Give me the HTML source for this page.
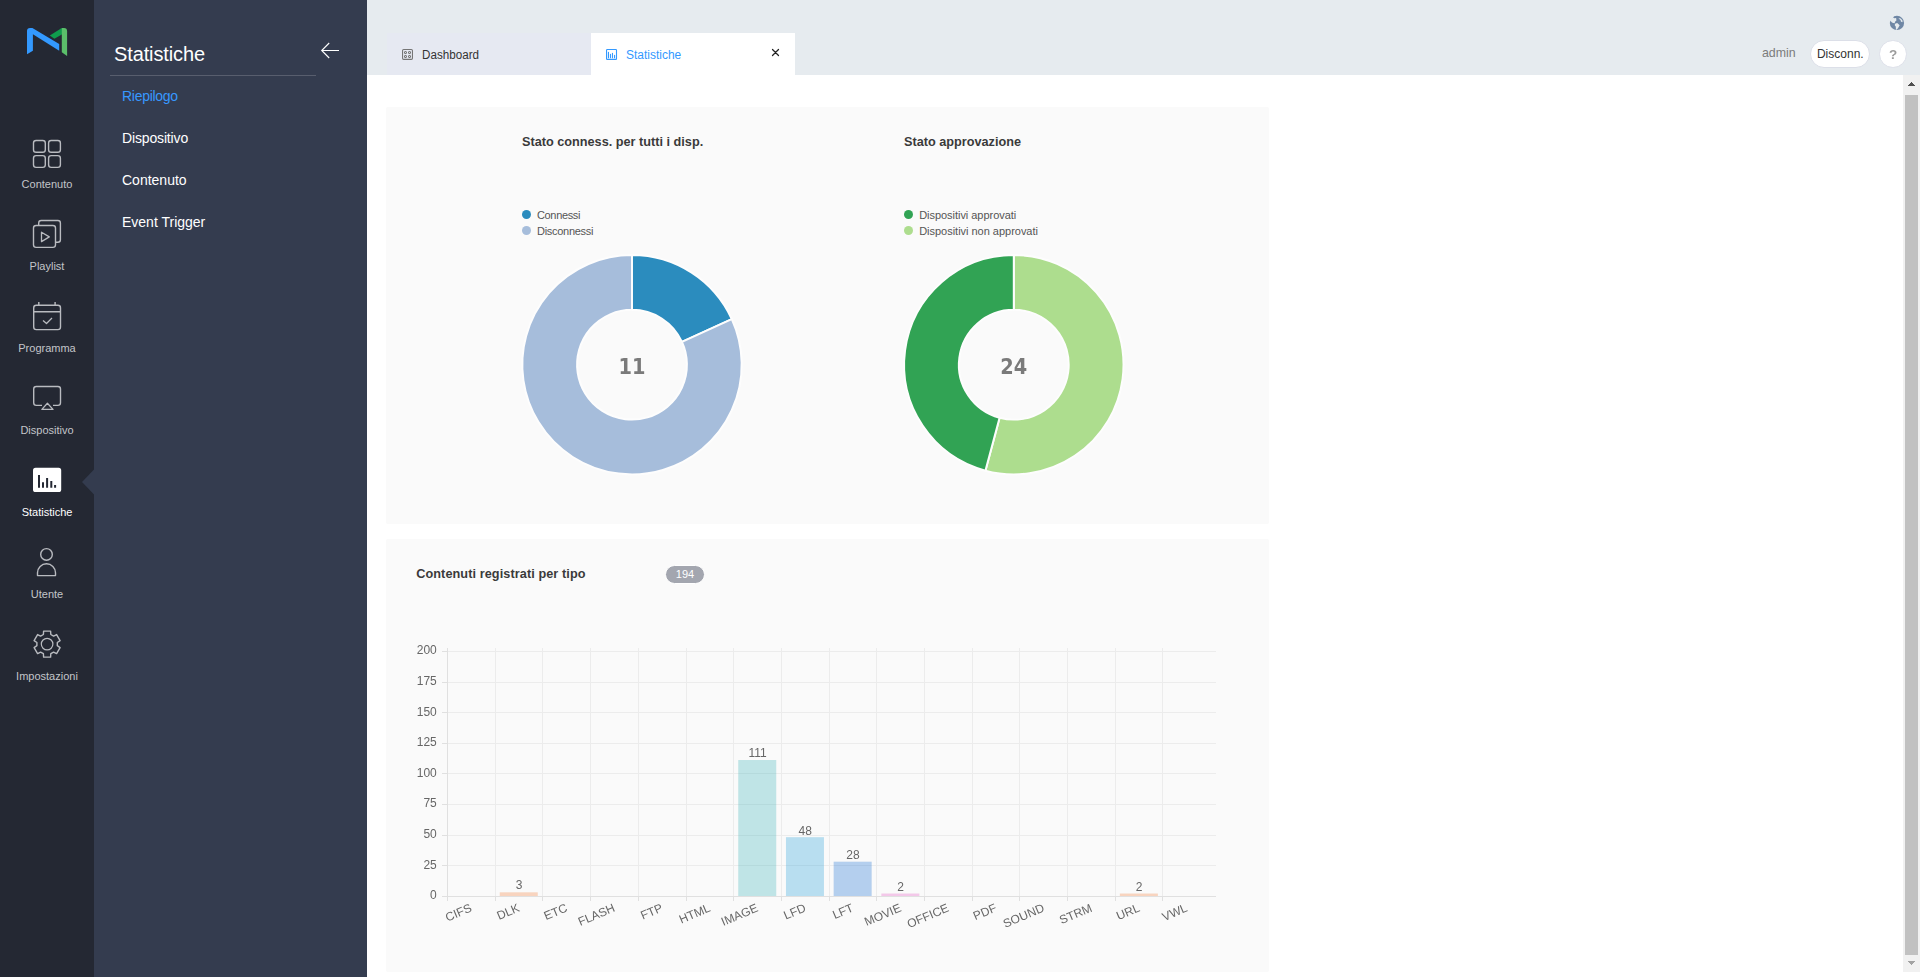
<!DOCTYPE html>
<html lang="it">
<head>
<meta charset="utf-8">
<title>Statistiche</title>
<style>
*{box-sizing:border-box;margin:0;padding:0}
html,body{width:1920px;height:977px;overflow:hidden;background:#fff}
body{position:relative;font-family:"Liberation Sans","DejaVu Sans",sans-serif;color:#333;-webkit-font-smoothing:antialiased}
.abs{position:absolute}
#nav{position:absolute;left:0;top:0;width:94px;height:977px;background:#242833}
#sub{position:absolute;left:94px;top:0;width:273px;height:977px;background:#343c4f}
#top{position:absolute;left:367px;top:0;width:1553px;height:75px;background:#e6ebef}
.navlbl{position:absolute;left:0;width:94px;text-align:center;font-size:11px;color:#c3c5c9;line-height:14px;white-space:nowrap}
.navlbl.on{color:#fff}
.subitem{position:absolute;left:28px;font-size:14px;color:#fff;line-height:20px;white-space:nowrap}
.tabtxt{font-size:12.5px;line-height:14px;white-space:nowrap;transform:scaleX(0.905);transform-origin:0 50%}
.card{position:absolute;left:386px;width:883px;background:#fafafa;border-radius:2px}
.card>*{margin-left:1px}
.ttl{position:absolute;font-weight:bold;font-size:12.7px;color:#3a3a3a;white-space:nowrap;line-height:16px}
.leg{position:absolute;font-size:11px;color:#555;white-space:nowrap;line-height:14px}
.dot{position:absolute;width:9.2px;height:9.2px;border-radius:50%}
</style>
</head>
<body>
<!-- LEFT NAV -->
<div id="nav">
<svg class="abs" style="left:0;top:0" width="94" height="977" viewBox="0 0 94 977" fill="none">
<!-- logo -->
<path d="M27,54.2 V31 Q27,28 30,28 H32.4 L59.2,43.9 V50.8 L32.9,34.2 V50.8 Z" fill="#3399ff"/>
<path d="M49.8,35.4 L61,28.4 L62.2,28 V34.2 L54.4,38.8 Z" fill="#0f9c4d"/>
<path d="M61.8,28 H64 Q67.1,28 67.1,31 V55.9 L61.8,52.3 Z" fill="#5bbf6a"/>
<g stroke="#b9bbc0" stroke-width="1.4" stroke-linejoin="round" stroke-linecap="butt">
<!-- contenuto -->
<rect x="33.5" y="140.5" width="11.8" height="11.8" rx="2.6"/>
<rect x="48.6" y="140.5" width="11.8" height="11.8" rx="2.6"/>
<rect x="33.5" y="155.6" width="11.8" height="11.8" rx="2.6"/>
<rect x="48.6" y="155.6" width="11.8" height="11.8" rx="2.6"/>
<!-- playlist -->
<rect x="33.5" y="225.5" width="22" height="21.9" rx="2.6"/>
<path d="M38.7,225 V223 Q38.7,220.5 41.2,220.5 H57.9 Q60.4,220.5 60.4,223 V239.7 Q60.4,242.2 57.9,242.2 H56"/>
<path d="M41.5,232.2 L49.3,236.9 L41.5,241.6 Z" stroke-width="1.3"/>
<!-- programma -->
<rect x="33.7" y="305.3" width="26.8" height="24.3" rx="2.6"/>
<path d="M33.7,311.7 H60.5 M38.8,302 V305.3 M55.1,302 V305.3"/>
<path d="M43,320.4 L46.5,323.5 L52,318" stroke-width="1.3"/>
<!-- dispositivo -->
<path d="M42,405.4 H36.3 Q33.7,405.4 33.7,402.8 V389.1 Q33.7,386.5 36.3,386.5 H57.9 Q60.5,386.5 60.5,389.1 V402.8 Q60.5,405.4 57.9,405.4 H53"/>
<path d="M47.4,403.3 L53,409.4 H41.9 Z" stroke-width="1.3"/>
<!-- utente -->
<circle cx="46.5" cy="554.4" r="5.8"/>
<path d="M37.5,575.6 V572.8 A9,9 0 0 1 55.5,572.8 V575.6 Z"/>
<!-- impostazioni -->
<path d="M50.8,634.5 L50.6,631.1 L43.6,631.1 L43.4,634.5 L40.6,636.1 L37.6,634.6 L34.1,640.6 L36.9,642.5 L36.9,645.7 L34.1,647.6 L37.6,653.6 L40.6,652.1 L43.4,653.7 L43.6,657.1 L50.6,657.1 L50.8,653.7 L53.6,652.1 L56.6,653.6 L60.1,647.6 L57.3,645.7 L57.3,642.5 L60.1,640.6 L56.6,634.6 L53.6,636.1Z"/>
<circle cx="47.1" cy="644.1" r="5.8" stroke-width="1.2"/>
</g>
<!-- statistiche (active) -->
<rect x="33" y="467.8" width="28.2" height="24.2" rx="2.6" fill="#fff"/>
<path d="M38,475 h2 v12.8 h-2z M42,482.3 h2 v5.5 h-2z M46.1,478 h2 v9.8 h-2z M50.3,481 h2 v6.8 h-2z M54.1,485 h2 v2.8 h-2z" fill="#242833"/>
<path d="M94,469.5 L82,482 L94,494.5 Z" fill="#343c4f"/>
</svg>
<div class="navlbl" style="top:177px">Contenuto</div>
<div class="navlbl" style="top:259px">Playlist</div>
<div class="navlbl" style="top:341px">Programma</div>
<div class="navlbl" style="top:423px">Dispositivo</div>
<div class="navlbl on" style="top:505px">Statistiche</div>
<div class="navlbl" style="top:587px">Utente</div>
<div class="navlbl" style="top:669px">Impostazioni</div>
</div>
<!-- SUB MENU -->
<div id="sub">
<div class="abs" style="left:20px;top:41.5px;font-size:20px;line-height:24px;color:#fff;white-space:nowrap;letter-spacing:-0.12px">Statistiche</div>
<div class="abs" style="left:16px;top:75px;width:206px;height:1px;background:#585e6e"></div>
<svg class="abs" style="left:224px;top:40px" width="24" height="22" viewBox="318 40 24 22" fill="none" stroke="#fff" stroke-width="1.1"><path d="M321.7,50.5 H339 M329.2,43 L321.7,50.5 L329.2,58"/></svg>
<div class="subitem" style="top:86px;color:#3798ff;letter-spacing:-0.28px">Riepilogo</div>
<div class="subitem" style="top:128px;letter-spacing:-0.15px">Dispositivo</div>
<div class="subitem" style="top:170px">Contenuto</div>
<div class="subitem" style="top:212px">Event Trigger</div>
</div>
<!-- TOP BAR -->
<div id="top">
<!-- tabs -->
<div class="abs" style="left:20.2px;top:33px;width:203.8px;height:42px;background:#e6e9f2"></div>
<svg class="abs" style="left:33px;top:47px" width="16" height="16" viewBox="400 47 16 16" fill="none" stroke="#757575" stroke-width="1.1"><rect x="402.55" y="49.45" width="9.9" height="9.9" rx="1.1"/><g stroke-width="1"><rect x="404.5" y="51.6" width="1.95" height="1.95" rx="0.35"/><rect x="408.55" y="51.6" width="1.95" height="1.95" rx="0.35"/><rect x="404.5" y="55.55" width="1.95" height="1.95" rx="0.35"/><rect x="408.55" y="55.55" width="1.95" height="1.95" rx="0.35"/></g></svg>
<div class="abs tabtxt" style="left:55.3px;top:48.3px;color:#333;transform:scaleX(0.932)">Dashboard</div>
<div class="abs" style="left:223.75px;top:33px;width:204.25px;height:42px;background:#fff"></div>
<svg class="abs" style="left:237px;top:47px" width="16" height="16" viewBox="604 47 16 16" fill="none" stroke="#3399ff" stroke-width="1.1"><rect x="606.55" y="49.55" width="9.95" height="9.8" rx="0.7"/><path d="M608.46,52.3 V57.8 M610.47,54.3 V57.8 M612.48,53.3 V57.8 M614.57,55.3 V57.8" stroke-linecap="round"/></svg>
<div class="abs tabtxt" style="left:258.7px;top:48.3px;color:#3399ff;transform:scaleX(0.957)">Statistiche</div>
<svg class="abs" style="left:403px;top:47px" width="11" height="11" viewBox="770 47 11 11" fill="none" stroke="#222" stroke-width="1.25" stroke-linecap="round"><path d="M772.5,49.5 L778.5,55.5 M778.5,49.5 L772.5,55.5"/></svg>
<!-- user area -->
<div class="abs" style="left:1394.9px;top:45.6px;font-size:12.4px;line-height:14px;color:#7b7b7b;white-space:nowrap">admin</div>
<div class="abs" style="left:1443.3px;top:40px;width:60px;height:27.8px;border-radius:14px;background:#fff;border:1px solid #dcdfe8;font-size:12px;line-height:26.4px;color:#333;text-align:center;white-space:nowrap">Disconn.</div>
<div class="abs" style="left:1512.3px;top:40.2px;width:27.5px;height:27.5px;border-radius:50%;background:#fff;border:1px solid #dcdfe8;font-size:13.5px;font-weight:bold;line-height:27.6px;color:#9c9c9c;text-align:center;text-indent:0.8px;will-change:transform">?</div>
<svg class="abs" style="left:1513px;top:8px" width="32" height="30" viewBox="0 0 1042 977"><circle cx="552" cy="488" r="232" fill="#6f87a5"/><g fill="#e6ebef"><path d="M300,420 L330,400 L420,310 L470,330 L525,325 L535,410 L495,440 L475,495 L430,490 L390,470 L330,410 L300,440 Z"/><path d="M290,430 A262,262 0 0 1 440,250 L430,315 L335,405 Z"/><path d="M490,510 L560,490 L640,560 L595,640 L545,712 L520,700 L512,600 L480,560 Z"/><path d="M610,330 L680,340 L740,420 L722,462 L680,440 L670,390 L612,352 Z"/></g></svg>
</div>
<!-- CONTENT -->
<div class="card" id="card1" style="top:107px;height:417px">
<div class="ttl" style="left:135px;top:26.5px">Stato conness. per tutti i disp.</div>
<div class="ttl" style="left:517px;top:26.5px">Stato approvazione</div>
<div class="dot" style="left:135px;top:102.8px;background:#2b8cbe"></div>
<div class="leg" style="left:150px;top:101px;letter-spacing:-0.35px">Connessi</div>
<div class="dot" style="left:135px;top:118.8px;background:#a6bddb"></div>
<div class="leg" style="left:150px;top:117px;letter-spacing:-0.28px">Disconnessi</div>
<div class="dot" style="left:517px;top:102.8px;background:#31a354"></div>
<div class="leg" style="left:532.2px;top:101px;letter-spacing:-0.04px">Dispositivi approvati</div>
<div class="dot" style="left:517px;top:118.8px;background:#addd8e"></div>
<div class="leg" style="left:532.2px;top:117px;letter-spacing:-0.02px">Dispositivi non approvati</div>
<svg class="abs" style="left:0;top:0;will-change:transform" width="882" height="417" viewBox="387 107 882 417">
<g stroke="#fdfdfd" stroke-width="2" stroke-linejoin="bevel">
<path d="M632.00,255.00 A109.7,109.7 0 0 1 731.79,319.13 L681.94,341.89 A54.9,54.9 0 0 0 632.00,309.80 Z" fill="#2b8cbe"/>
<path d="M731.79,319.13 A109.7,109.7 0 1 1 632.00,255.00 L632.00,309.80 A54.9,54.9 0 1 0 681.94,341.89 Z" fill="#a6bddb"/>
<path d="M1013.80,255.00 A109.7,109.7 0 1 1 985.41,470.66 L999.59,417.73 A54.9,54.9 0 1 0 1013.80,309.80 Z" fill="#addd8e"/>
<path d="M985.41,470.66 A109.7,109.7 0 0 1 1013.80,255.00 L1013.80,309.80 A54.9,54.9 0 0 0 999.59,417.73 Z" fill="#31a354"/>
</g>
<g font-family="'DejaVu Sans Condensed','Liberation Sans',sans-serif" font-weight="bold" font-size="21.5" fill="#7a7a7a" text-anchor="middle">
<text x="632" y="374">11</text><text x="1013.8" y="374">24</text></g>
</svg>
</div>
<div class="card" id="card2" style="top:539px;height:433px">
<div class="ttl" style="left:29.2px;top:26.5px;letter-spacing:0.08px">Contenuti registrati per tipo</div>
<div class="abs" style="left:278px;top:26px;width:40px;height:19px;border-radius:9.5px;background:#a3a6af;border:1px solid #fff;color:#fff;font-size:11px;line-height:17.4px;text-align:center">194</div>
<svg class="abs" style="left:0;top:0;will-change:transform" width="882" height="433" viewBox="387 539 882 433">
<path d="M448,651.5 H1216 M448,682.5 H1216 M448,712.5 H1216 M448,743.5 H1216 M448,773.5 H1216 M448,804.5 H1216 M448,835.5 H1216 M448,865.5 H1216 M495.5,648 V896 M542.5,648 V896 M590.5,648 V896 M638.5,648 V896 M686.5,648 V896 M733.5,648 V896 M781.5,648 V896 M829.5,648 V896 M876.5,648 V896 M924.5,648 V896 M972.5,648 V896 M1019.5,648 V896 M1067.5,648 V896 M1115.5,648 V896 M1162.5,648 V896" stroke="#ececec" stroke-width="1" fill="none"/>
<path d="M442,651.5 H447 M442,682.5 H447 M442,712.5 H447 M442,743.5 H447 M442,773.5 H447 M442,804.5 H447 M442,835.5 H447 M442,865.5 H447 M442,896.5 H1216 M447.5,648 V901 M495.5,897 V901 M542.5,897 V901 M590.5,897 V901 M638.5,897 V901 M686.5,897 V901 M733.5,897 V901 M781.5,897 V901 M829.5,897 V901 M876.5,897 V901 M924.5,897 V901 M972.5,897 V901 M1019.5,897 V901 M1067.5,897 V901 M1115.5,897 V901 M1162.5,897 V901" stroke="#e0e0e0" stroke-width="1" fill="none"/>
<rect x="499.75" y="892.33" width="38.0" height="3.67" fill="rgb(244,141,79)" fill-opacity="0.35"/>
<rect x="738.25" y="760.02" width="38.0" height="135.98" fill="rgb(79,187,193)" fill-opacity="0.35"/>
<rect x="785.95" y="837.20" width="38.0" height="58.80" fill="rgb(59,170,221)" fill-opacity="0.35"/>
<rect x="833.65" y="861.70" width="38.0" height="34.30" fill="rgb(50,127,216)" fill-opacity="0.35"/>
<rect x="881.35" y="893.55" width="38.0" height="2.45" fill="rgb(230,107,201)" fill-opacity="0.35"/>
<rect x="1119.85" y="893.55" width="38.0" height="2.45" fill="rgb(244,141,79)" fill-opacity="0.35"/>
<g font-family="'Liberation Sans',sans-serif" font-size="12" fill="#666">
<g text-anchor="middle">
<text x="519.05" y="889.03">3</text>
<text x="757.55" y="756.73">111</text>
<text x="805.25" y="834.90">48</text>
<text x="852.95" y="859.40">28</text>
<text x="900.65" y="891.25">2</text>
<text x="1139.15" y="891.25">2</text>
</g>
<g text-anchor="end">
<text x="436.8" y="654.30">200</text>
<text x="436.8" y="684.92">175</text>
<text x="436.8" y="715.55">150</text>
<text x="436.8" y="746.17">125</text>
<text x="436.8" y="776.80">100</text>
<text x="436.8" y="807.42">75</text>
<text x="436.8" y="838.05">50</text>
<text x="436.8" y="868.67">25</text>
<text x="436.8" y="899.30">0</text>
</g>
<g text-anchor="end">
<text transform="translate(471.05,907) rotate(-23)" x="0" y="4.3">CIFS</text>
<text transform="translate(518.75,907) rotate(-23)" x="0" y="4.3">DLK</text>
<text transform="translate(566.45,907) rotate(-23)" x="0" y="4.3">ETC</text>
<text transform="translate(614.15,907) rotate(-23)" x="0" y="4.3">FLASH</text>
<text transform="translate(661.85,907) rotate(-23)" x="0" y="4.3">FTP</text>
<text transform="translate(709.55,907) rotate(-23)" x="0" y="4.3">HTML</text>
<text transform="translate(757.25,907) rotate(-23)" x="0" y="4.3">IMAGE</text>
<text transform="translate(804.95,907) rotate(-23)" x="0" y="4.3">LFD</text>
<text transform="translate(852.65,907) rotate(-23)" x="0" y="4.3">LFT</text>
<text transform="translate(900.35,907) rotate(-23)" x="0" y="4.3">MOVIE</text>
<text transform="translate(948.05,907) rotate(-23)" x="0" y="4.3">OFFICE</text>
<text transform="translate(995.75,907) rotate(-23)" x="0" y="4.3">PDF</text>
<text transform="translate(1043.45,907) rotate(-23)" x="0" y="4.3">SOUND</text>
<text transform="translate(1091.15,907) rotate(-23)" x="0" y="4.3">STRM</text>
<text transform="translate(1138.85,907) rotate(-23)" x="0" y="4.3">URL</text>
<text transform="translate(1186.55,907) rotate(-23)" x="0" y="4.3">VWL</text>
</g></g>
</svg>
</div>
<!-- SCROLLBAR -->
<div id="sb" class="abs" style="left:1903px;top:75px;width:17px;height:897px;background:#f1f1f1">
<div class="abs" style="left:2px;top:20px;width:13px;height:860px;background:#c1c1c1"></div>
<svg class="abs" style="left:0;top:0" width="17" height="897" viewBox="0 0 17 897" shape-rendering="crispEdges"><path d="M8,7h1v1h-1z M7,8h3v1h-3z M6,9h5v1h-5z M5,10h7v1h-7z" fill="#505050"/><path d="M5,886h7v1h-7z M6,887h5v1h-5z M7,888h3v1h-3z M8,889h1v1h-1z" fill="#a3a3a3"/></svg>
</div>
</body>
</html>
